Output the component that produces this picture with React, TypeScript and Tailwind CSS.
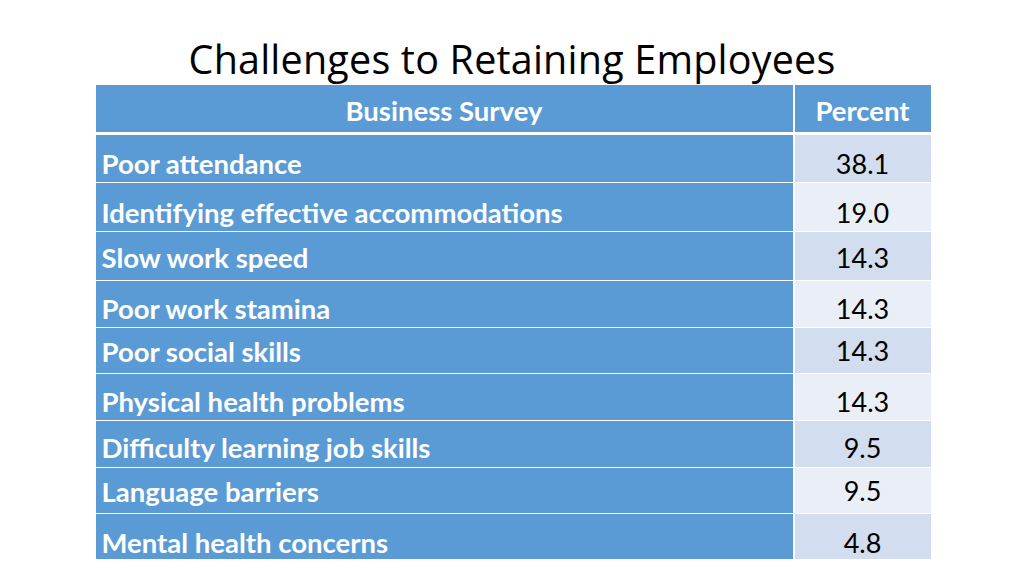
import React from "react";

const rows = [
  { label: "Poor attendance", value: "38.1", h: "h-[48px]", pt: "pt-[11px]" },
  { label: "Identifying effective accommodations", value: "19.0", h: "h-[49px]", pt: "pt-[12px]" },
  { label: "Slow work speed", value: "14.3", h: "h-[49px]", pt: "pt-[4px]" },
  { label: "Poor work stamina", value: "14.3", h: "h-[47px]", pt: "pt-[10px]" },
  { label: "Poor social skills", value: "14.3", h: "h-[46px]", pt: "pt-[2px]" },
  { label: "Physical health problems", value: "14.3", h: "h-[47px]", pt: "pt-[10px]" },
  { label: "Difficulty learning job skills", value: "9.5", h: "h-[47px]", pt: "pt-[8px]" },
  { label: "Language barriers", value: "9.5", h: "h-[46px]", pt: "pt-[2px]" },
  { label: "Mental health concerns", value: "4.8", h: "h-[45px]", pt: "pt-[13px]" },
];

export default function App() {
  return (
    <div className="w-[1024px] h-[575px] bg-white overflow-hidden flex flex-col items-center">
      <h1 className="mt-[36px] text-[39.5px] leading-[46px] text-black font-['Open_Sans',sans-serif] tracking-[0.2px]">
        Challenges to Retaining Employees
      </h1>

      {/* table */}
      <div className="mt-[3px] w-[835px] ml-[2px] flex flex-col font-['Lato',sans-serif]">
        <div className="flex h-[50px] border-b-[3px] border-white">
          <div className="w-[697px] bg-[#5b9bd5] flex items-center justify-center pt-[4px] text-white font-bold text-[27.5px]">
            Business Survey
          </div>
          <div className="flex-1 bg-[#5b9bd5] border-l-2 border-white flex items-center justify-center pt-[4px] text-white font-bold text-[27.5px]">
            Percent
          </div>
        </div>
        {rows.map((r, i) => (
          <div key={i} className={`flex ${r.h} ${i < rows.length - 1 ? "border-b" : ""} border-white`}>
            <div className={`w-[697px] bg-[#5b9bd5] flex items-center pl-[6px] ${r.pt} text-white font-bold text-[27.5px]`}>
              {r.label}
            </div>
            <div
              className={`flex-1 border-l-2 border-white flex items-center justify-center ${r.pt} text-black text-[27px] ${
                i % 2 === 0 ? "bg-[#d2deef]" : "bg-[#eaeff7]"
              }`}
            >
              {r.value}
            </div>
          </div>
        ))}
      </div>
    </div>
  );
}
